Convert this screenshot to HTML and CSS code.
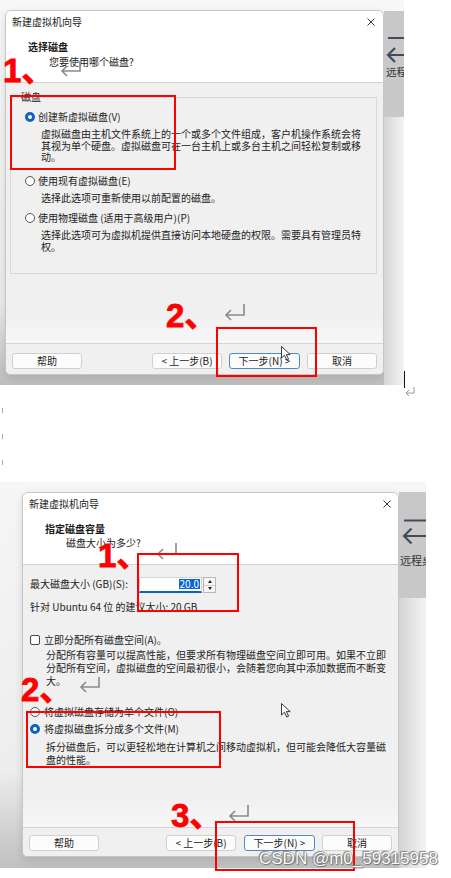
FILE: index.html
```html
<!DOCTYPE html>
<html lang="zh-CN">
<head>
    <meta charset="UTF-8">
    <meta name="viewport" content="width=device-width, initial-scale=1.0">
    <title>新建虚拟机向导</title>
    <link rel="stylesheet" href="styles.css">
</head>
<body>
    <div class="row-one">
        <div class="shot shot-one">
            <div class="dialog d1">
                <div class="dlg-head">
                    <div class="dlg-title">
                        <span>新建虚拟机向导</span>
                        <svg class="close" width="8" height="8" viewBox="0 0 8 8"><path d="M0.5 0.5L7.5 7.5M7.5 0.5L0.5 7.5"/></svg>
                    </div>
                    <div class="step-title">选择磁盘</div>
                    <div class="step-sub">您要使用哪个磁盘?</div>
                </div>
                <div class="dlg-body">
                    <fieldset class="group">
                        <legend>磁盘</legend>
                        <div class="opt opt-first"><span class="radio on"></span>创建新虚拟磁盘(V)</div>
                        <p class="desc">虚拟磁盘由主机文件系统上的一个或多个文件组成，客户机操作系统会将其视为单个硬盘。虚拟磁盘可在一台主机上或多台主机之间轻松复制或移动。</p>
                        <div class="opt opt-mid"><span class="radio"></span>使用现有虚拟磁盘(E)</div>
                        <p class="desc">选择此选项可重新使用以前配置的磁盘。</p>
                        <div class="opt opt-last"><span class="radio"></span>使用物理磁盘 (适用于高级用户)(P)</div>
                        <p class="desc">选择此选项可为虚拟机提供直接访问本地硬盘的权限。需要具有管理员特权。</p>
                    </fieldset>
                </div>
                <div class="dlg-foot">
                    <button class="btn">帮助</button>
                    <button class="btn btn-back">&lt; 上一步(B)</button>
                    <button class="btn btn-next">下一步(N) &gt;</button>
                    <button class="btn">取消</button>
                </div>
            </div>
            <div class="side side-one">
                <div class="strip">
                    <svg class="strip-icon" width="20" height="55" viewBox="0 0 20 55"><path d="M4 27H20M4 44H20M11 37L4 44L11 51"/></svg>
                    <span class="strip-label">远程桌面</span>
                </div>
                <div class="shade"></div>
            </div>

            <div class="num" style="left:3px;top:54px">1、</div>
            <svg class="enter" style="left:60px;top:61px" width="22" height="16" viewBox="0 0 22 16"><path d="M20 0V10H2M7 5L2 10L7 15"/></svg>
            <div class="mark" style="left:10px;top:95px;width:166px;height:75px"></div>
            <div class="num" style="left:166px;top:299px">2、</div>
            <svg class="enter" style="left:224px;top:304px" width="22" height="17" viewBox="0 0 22 17"><path d="M20 0V11H2M7 6L2 11L7 16"/></svg>
            <div class="mark" style="left:216px;top:327px;width:101px;height:50px"></div>
            <svg class="pointer" style="left:281px;top:346px" width="10" height="15" viewBox="0 0 10 15"><path d="M0.5 0.5V12L3.5 9.2L5.8 14L7.6 13.2L5.4 8.6H9.2Z"/></svg>
        </div>
        <div class="caret">
            <svg width="11" height="9" viewBox="0 0 11 9"><path d="M9 0V6H1M4 3L1 6L4 9"/></svg>
        </div>
    </div>

    <div class="gap">
        <div class="pmark"></div>
        <div class="pmark"></div>
        <div class="pmark"></div>
    </div>

    <div class="shot shot-two">
        <div class="dialog d2">
            <div class="dlg-head">
                <div class="dlg-title">
                    <span>新建虚拟机向导</span>
                    <svg class="close" width="8" height="8" viewBox="0 0 8 8"><path d="M0.5 0.5L7.5 7.5M7.5 0.5L0.5 7.5"/></svg>
                </div>
                <div class="step-title">指定磁盘容量</div>
                <div class="step-sub">磁盘大小为多少?</div>
            </div>
            <div class="dlg-body body-two">
                <div class="size-row">
                    <span class="size-label">最大磁盘大小 (GB)(S):</span>
                    <span class="size-field"><span class="sel">20.0</span></span>
                    <span class="spin"><i class="up"></i><i class="down"></i></span>
                </div>
                <div class="hint">针对 Ubuntu 64 位 的建议大小: 20 GB</div>
                <div class="check-row"><span class="check"></span>立即分配所有磁盘空间(A)。</div>
                <p class="desc2">分配所有容量可以提高性能，但要求所有物理磁盘空间立即可用。如果不立即分配所有空间，虚拟磁盘的空间最初很小，会随着您向其中添加数据而不断变大。</p>
                <div class="opt2 opt2-first"><span class="radio"></span>将虚拟磁盘存储为单个文件(O)</div>
                <div class="opt2 opt2-second"><span class="radio on"></span>将虚拟磁盘拆分成多个文件(M)</div>
                <p class="desc2">拆分磁盘后，可以更轻松地在计算机之间移动虚拟机，但可能会降低大容量磁盘的性能。</p>
            </div>
            <div class="dlg-foot">
                <button class="btn">帮助</button>
                <button class="btn btn-back">&lt; 上一步(B)</button>
                <button class="btn btn-next">下一步(N) &gt;</button>
                <button class="btn">取消</button>
            </div>
        </div>
        <div class="side side-two">
            <div class="strip">
                <svg class="strip-icon" width="27" height="61" viewBox="0 0 27 61"><path d="M5 28.5H27M5 44H27M12.5 36.5L5 44L12.5 51.5"/></svg>
                <span class="strip-label">远程桌面</span>
            </div>
            <div class="shade"></div>
        </div>

        <div class="num" style="left:98px;top:57px">1、</div>
        <svg class="enter" style="left:156px;top:61px" width="22" height="17" viewBox="0 0 22 17"><path d="M20 0V11H2M7 6L2 11L7 16"/></svg>
        <div class="mark" style="left:137px;top:71px;width:102px;height:59px"></div>
        <div class="num" style="left:21px;top:191px">2、</div>
        <svg class="enter" style="left:79px;top:195px" width="22" height="16" viewBox="0 0 22 16"><path d="M20 0V10H2M7 5L2 10L7 15"/></svg>
        <div class="mark" style="left:26px;top:229px;width:195px;height:57px"></div>
        <div class="num" style="left:171px;top:317px">3、</div>
        <svg class="enter" style="left:228px;top:323px" width="22" height="17" viewBox="0 0 22 17"><path d="M20 0V11H2M7 6L2 11L7 16"/></svg>
        <div class="mark" style="left:215px;top:339px;width:140px;height:50px"></div>
        <svg class="pointer" style="left:281px;top:221px" width="10" height="15" viewBox="0 0 10 15"><path d="M0.5 0.5V12L3.5 9.2L5.8 14L7.6 13.2L5.4 8.6H9.2Z"/></svg>
        <div class="watermark">CSDN @m0_59315958</div>
    </div>
</body>
</html>
```

FILE: styles.css
```css
* {
    margin: 0;
    padding: 0;
    box-sizing: border-box;
}
body {
    width: 451px;
    height: 878px;
    overflow: hidden;
    background: #fff;
    color: #1b1b1b;
    font-family: "Noto Sans CJK SC", "Noto Sans", sans-serif;
}

/* screenshot frames */
.row-one {
    display: flex;
    height: 385px;
}
.shot {
    position: relative;
    display: flex;
    flex-shrink: 0;
}
.shot-one {
    width: 404px;
    height: 385px;
    padding: 10px 0 0 5px;
    background: linear-gradient(#f7f7f7, #ececec 78%, #bdbdbd);
}
.shot-two {
    width: 426px;
    height: 386px;
    padding: 10px 0 0 22px;
    background: linear-gradient(#f6f6f6, #ededed 75%, #c0c0c0);
}
.caret {
    align-self: flex-end;
    margin-bottom: -3px;
    height: 17px;
    border-left: 1px solid #111;
    padding-top: 6px;
}
.caret path {
    fill: none;
    stroke: #999;
    stroke-width: 1;
}
.gap {
    height: 97px;
    padding-top: 23px;
}
.pmark {
    width: 1px;
    height: 5px;
    margin: 0 0 21px 2px;
    background: #aaa;
}

/* dialog */
.dialog {
    display: flex;
    flex-direction: column;
    height: 365px;
    background: #f0f0f0;
    border: 1px solid #c6c6c6;
    border-radius: 6px 6px 5px 5px;
    overflow: hidden;
    box-shadow: 0 3px 8px rgba(0, 0, 0, 0.12);
    font-size: 10px;
}
.d1 {
    width: 379px;
}
.d2 {
    width: 377px;
}
.dlg-head {
    height: 72px;
    padding: 5px 8px 0 6px;
    background: #fff;
    border-bottom: 1px solid #d2d2d2;
    flex-shrink: 0;
}
.d2 .dlg-head {
    padding-right: 7px;
}
.dlg-title {
    display: flex;
    justify-content: space-between;
    align-items: center;
    line-height: 12px;
    color: #222;
}
.close path {
    stroke: #333;
    stroke-width: 1;
}
.step-title {
    margin: 13px 0 0 16px;
    font-weight: bold;
    line-height: 12px;
}
.step-sub {
    margin: 3px 0 0 37px;
    line-height: 12px;
}
.d2 .step-sub {
    margin-top: 1.5px;
}
.dlg-body {
    flex: 1;
    padding: 8px 6px 0 4px;
    background: linear-gradient(#f0f0f0 calc(100% - 30px), #f7f7f7);
}
.dlg-foot {
    display: flex;
    gap: 7px;
    height: 31px;
    padding: 9px 6px 0;
    border-top: 1px solid #d6d6d6;
    flex-shrink: 0;
}
.d2 .dlg-foot {
    height: 29px;
    padding-top: 7px;
}
.btn {
    width: 70px;
    height: 16px;
    border: 1px solid #d0d0d0;
    border-radius: 3px;
    background: #fcfcfc;
    color: #1b1b1b;
    font-family: inherit;
    font-size: 10px;
    line-height: 14px;
}
.btn-back {
    margin-left: auto;
}
.btn-next {
    width: 71px;
    border-color: #4f89c6;
}
.d2 .btn-back {
    margin-right: 1px;
}

/* group of options */
.group {
    border: 1px solid #d9d9d9;
    padding: 0 6px 21px 8px;
}
.group legend {
    padding: 0 2px;
    line-height: 12px;
}
.opt {
    display: flex;
    align-items: center;
    line-height: 12px;
    margin-left: 6px;
}
.opt-first { margin-top: 8px; }
.opt-mid { margin-top: 12px; }
.opt-last { margin-top: 9px; }
.desc {
    width: 326px;
    margin: 5px 0 0 22px;
    line-height: 11.5px;
    color: #222;
}
.radio {
    width: 10px;
    height: 10px;
    margin-right: 3px;
    border: 1px solid #555;
    border-radius: 50%;
    background: #fff;
    flex-shrink: 0;
}
.radio.on {
    border: 3.5px solid #0a63c2;
}

/* page two body */
.body-two {
    padding: 12px 6px 0 7px;
}
.size-row {
    display: flex;
    align-items: flex-start;
    height: 16px;
}
.size-label {
    width: 109px;
    line-height: 13px;
}
.size-field {
    display: flex;
    justify-content: flex-end;
    align-items: center;
    width: 63px;
    height: 16px;
    padding: 0 1px 1px 0;
    background: #fff;
    border: 1px solid #d4d4d4;
    border-bottom: 2px solid #0a63c2;
}
.sel {
    background: #0a64d8;
    color: #fff;
    line-height: 10px;
    padding: 0 1px;
}
.spin {
    display: flex;
    flex-direction: column;
    width: 13px;
    height: 16px;
    margin-left: 1px;
    border: 1px solid #b8b8b8;
    background: #f6f6f6;
}
.spin i {
    flex: 1;
    display: flex;
    justify-content: center;
    align-items: center;
}
.spin i::after {
    content: "";
    border-left: 2.5px solid transparent;
    border-right: 2.5px solid transparent;
}
.spin .up {
    border-bottom: 1px solid #d0d0d0;
}
.spin .up::after {
    border-bottom: 3px solid #222;
}
.spin .down::after {
    border-top: 3px solid #222;
}
.hint {
    margin-top: 7px;
    line-height: 13px;
}
.check-row {
    display: flex;
    align-items: center;
    margin-top: 20px;
    line-height: 13px;
}
.check {
    width: 10px;
    height: 10px;
    margin-right: 4px;
    border: 1px solid #444;
    border-radius: 2px;
    background: #fff;
}
.desc2 {
    width: 344px;
    margin: 2px 0 0 16px;
    line-height: 13px;
    color: #222;
}
.opt2 {
    display: flex;
    align-items: center;
    line-height: 13px;
}
.opt2 .radio {
    margin-right: 4px;
}
.opt2-first { margin-top: 18px; }
.opt2-second { margin-top: 4px; }
.opt2-second + .desc2 { margin-top: 5px; }

/* side strip of the window behind */
.side {
    display: flex;
    flex-direction: column;
}
.side-one {
    width: 20px;
}
.side-two {
    width: 27px;
}
.strip {
    display: flex;
    flex-direction: column;
    background: #c8c8c8;
    overflow: hidden;
}
.side-one .strip {
    height: 106px;
    margin-top: 1px;
}
.side-two .strip {
    height: 106px;
}
.strip-icon path {
    fill: none;
    stroke: #3e4c5b;
    stroke-width: 2.2;
}
.strip-label {
    white-space: nowrap;
    font-size: 10.5px;
    line-height: 12px;
    color: #333;
    margin-left: 2px;
}
.side-two .strip-label {
    margin: 1px 0 0 1px;
    font-size: 11px;
}
.shade {
    flex: 1;
    background: linear-gradient(to right, #d4d4d4, #f4f4f4);
}

/* annotations drawn over the screenshots */
.mark {
    position: absolute;
    border: 2px solid #f00;
}
.num {
    position: absolute;
    color: #f00;
    font: bold 33px/33px "Liberation Sans", "Noto Sans CJK SC", sans-serif;
    -webkit-text-stroke: 0.8px #f00;
    white-space: nowrap;
}
.enter {
    position: absolute;
}
.enter path {
    fill: none;
    stroke: #8a8a8a;
    stroke-width: 1.6;
}
.pointer {
    position: absolute;
}
.pointer path {
    fill: #fff;
    stroke: #222;
    stroke-width: 0.9;
}
.watermark {
    position: absolute;
    left: 259px;
    top: 368px;
    font: 17px/17px "Liberation Sans", sans-serif;
    color: #fff;
    white-space: nowrap;
    text-shadow: 0 0 1px #555, 1px 1px 1px #777, -1px -1px 1px #888;
}
```
